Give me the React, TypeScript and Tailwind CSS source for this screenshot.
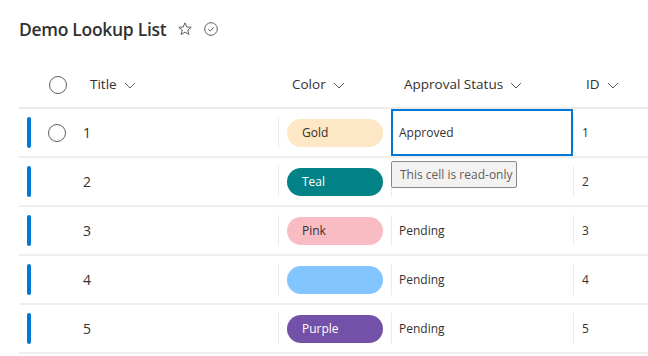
import React from 'react';

const rows = [
  { id: 1, color: 'Gold', bg: 'bg-[#fde7c4]', fg: 'text-[#323130]', status: 'Approved' },
  { id: 2, color: 'Teal', bg: 'bg-[#038387]', fg: 'text-white', status: '' },
  { id: 3, color: 'Pink', bg: 'bg-[#f9bcc2]', fg: 'text-[#323130]', status: 'Pending' },
  { id: 4, color: '', bg: 'bg-[#83c5ff]', fg: 'text-[#323130]', status: 'Pending' },
  { id: 5, color: 'Purple', bg: 'bg-[#7451a9]', fg: 'text-white', status: 'Pending' },
];

const Chevron = () => (
  <svg width="12" height="12" viewBox="0 0 12 12" className="ml-[7px]">
    <path d="M1 4 L6 9 L11 4" fill="none" stroke="#605e5c" strokeWidth="1" />
  </svg>
);

const Circle = () => (
  <div className="w-[18px] h-[18px] rounded-full border border-[#605e5c]" />
);

const Divider = () => <div className="w-px h-[31px] bg-[#edebe9]" />;

const HeaderCell = ({ label, className }: { label: string; className: string }) => (
  <div className={`flex items-center text-[13.5px] text-[#323130] ${className}`}>
    {label}
    <Chevron />
  </div>
);

const App = () => {
  return (
    <div
      className="relative w-[648px] h-[356px] bg-white overflow-hidden text-[#323130]"
      style={{ fontFamily: '"Open Sans", "Noto Sans", sans-serif' }}
    >
      <div className="flex items-center h-[56px] pl-[19px] pt-[2px]">
        <h1 className="text-[17.5px] font-semibold text-[#323130] tracking-[-0.3px]">Demo Lookup List</h1>
        <svg width="16" height="16" viewBox="0 0 16 16" className="ml-[11px]">
          <path
            d="M8 1.8 L9.8 6 L14.2 6.3 L10.8 9.1 L11.9 13.5 L8 11.1 L4.1 13.5 L5.2 9.1 L1.8 6.3 L6.2 6 Z"
            fill="none"
            stroke="#605e5c"
            strokeWidth="1"
            strokeLinejoin="round"
          />
        </svg>
        <svg width="16" height="16" viewBox="0 0 16 16" className="ml-[10px]">
          <circle cx="8" cy="8" r="6.3" fill="none" stroke="#605e5c" strokeWidth="1" />
          <path d="M5.2 8.2 L7.2 10.1 L10.9 6.2" fill="none" stroke="#605e5c" strokeWidth="1" />
        </svg>
      </div>

      <div className="ml-[19px] h-[53px] pt-[6px] flex items-center border-b-2 border-[#edebe9]">
        <div className="w-[21px]" />
        <div className="w-[50px] pl-[9px]">
          <Circle />
        </div>
        <HeaderCell label="Title" className="w-[188px]" />
        <HeaderCell label="Color" className="w-[113px] pl-[14px]" />
        <HeaderCell label="Approval Status" className="w-[182px] pl-[13px]" />
        <HeaderCell label="ID" className="pl-[13px]" />
      </div>

      {rows.map((r) => (
        <div key={r.id} className="ml-[19px] h-[49px] flex items-center border-b-2 border-[#f0efee]">
          <div className="w-[21px] pl-[8px]">
            <div className="w-[4px] h-[31px] rounded-full bg-[#0078d4]" />
          </div>
          <div className="w-[43px] pl-[8px]">{r.id === 1 && <Circle />}</div>
          <div className="w-[195px] text-[14px]">{r.id}</div>
          <div className="w-[113px] flex items-center">
            <Divider />
            <div className={`ml-[8px] w-[96px] h-[28px] rounded-full flex items-center pl-[15px] text-[12px] ${r.bg} ${r.fg}`}>
              {r.color}
            </div>
          </div>
          <div className="w-[182px] h-full flex items-center">
            {r.id === 1 ? (
              <div className="w-full h-[47px] border-2 border-[#0078d4] flex items-center pl-[6px] text-[12px]">
                {r.status}
              </div>
            ) : (
              <>
                <Divider />
                <span className="pl-[7px] text-[12px]">{r.status}</span>
              </>
            )}
          </div>
          <div className="flex items-center">
            <Divider />
            <span className="pl-[8px] text-[12px]">{r.id}</span>
          </div>
        </div>
      ))}

      <div className="absolute left-[391px] top-[161px] w-[126px] h-[27px] bg-[#f3f2f1] border border-[#8a8886] rounded-[2px] flex items-center pl-[8px] text-[12px] text-[#605e5c]">
        This cell is read-only
      </div>
    </div>
  );
};

export default App;
